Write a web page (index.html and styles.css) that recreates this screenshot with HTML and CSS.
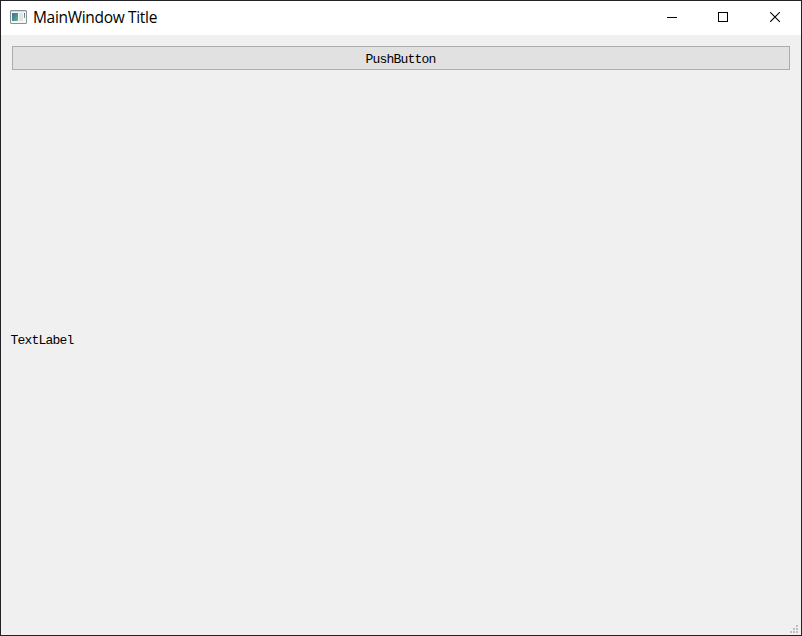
FILE: index.html
```html
<!DOCTYPE html>
<html lang="en">
<head>
<meta charset="utf-8">
<title>MainWindow Title</title>
<link rel="stylesheet" href="styles.css">
</head>
<body>
<div class="window">
  <header class="titlebar">
    <svg class="app-icon" width="17" height="15" viewBox="0 0 17 15">
      <defs>
        <linearGradient id="pane" x1="0" y1="0" x2="1" y2="1"><stop offset="0" stop-color="#4370ad"/><stop offset=".55" stop-color="#48958d"/><stop offset="1" stop-color="#70bd82"/></linearGradient>
        <linearGradient id="bar" x1="0" y1="0" x2="0" y2="1"><stop offset="0" stop-color="#3f6dc0"/><stop offset="1" stop-color="#55b978"/></linearGradient>
      </defs>
      <rect x=".5" y=".5" width="16" height="13" rx=".5" fill="#f7f7f7" stroke="#8b9097"/>
      <path d="M1 1.5h15" stroke="#d5dade"/>
      <rect x="2" y="3" width="6" height="8" fill="url(#pane)"/>
      <rect x="9" y="3" width="4" height="8" fill="#e4e4e4"/>
      <rect x="14" y="3" width="1" height="5" fill="url(#bar)"/>
    </svg>
    <span class="title">MainWindow Title</span>
    <div class="controls">
      <svg class="control" viewBox="0 0 11 11"><rect x="0" y="5" width="10" height="1"/></svg>
      <svg class="control" viewBox="0 0 11 11"><rect x=".5" y=".5" width="9" height="9" fill="none" stroke="#000"/></svg>
      <svg class="control" viewBox="0 0 11 11"><path d="M.2 .2 9.8 9.8M9.8 .2 .2 9.8" fill="none" stroke="#000" stroke-width="1.1"/></svg>
    </div>
  </header>
  <main class="content">
    <button class="push-button" type="button">PushButton</button>
    <div class="label">TextLabel</div>
  </main>
  <svg class="size-grip" width="8" height="8" viewBox="0 0 8 8"><path d="M6 0h2v2H6zM3 3h2v2H3zM6 3h2v2H6zM0 6h2v2H0zM3 6h2v2H3zM6 6h2v2H6z" fill="#bfbfbf"/></svg>
</div>
</body>
</html>
```
FILE: styles.css
```css
* { box-sizing: border-box; }
body { margin: 0; }
.window {
  position: relative;
  display: flex;
  flex-direction: column;
  width: 802px;
  height: 636px;
  border: 1px solid #242126;
  background: #f0f0f0;
  color: #000;
}
.titlebar {
  display: flex;
  align-items: flex-start;
  height: 34px;
  padding: 9px 21px 0 9px;
  background: #fff;
}
.app-icon { flex: none; }
.title {
  margin: -1px 0 0 6px;
  font: 15.5px/16px "Open Sans", sans-serif;
  letter-spacing: -0.32px;
  white-space: nowrap;
}
.controls {
  display: flex;
  gap: 40px;
  margin: 2px 0 0 auto;
}
.control { width: 11px; height: 11px; }
.control:nth-child(3) { margin-left: 1px; margin-right: -1px; }
.content {
  display: flex;
  flex: 1;
  flex-direction: column;
  padding: 11px 11px 9px;
}
.push-button {
  height: 24px;
  padding: 2px 1px 0 0;
  border: 1px solid #adadad;
  background: #e1e1e1;
  color: #000;
}
.push-button,
.label {
  font-family: "Liberation Mono", monospace;
  font-size: 13px;
  letter-spacing: -0.8px;
}
.label {
  display: flex;
  flex: 1;
  align-items: center;
  margin-left: -1.5px;
  padding-bottom: 15px;
}
.size-grip {
  position: absolute;
  right: 3px;
  bottom: 2px;
}
```
